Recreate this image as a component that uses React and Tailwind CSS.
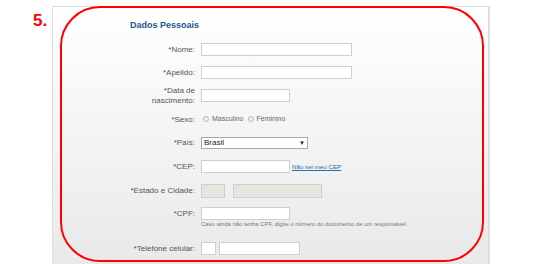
import React from "react";

const font = { fontFamily: '"Liberation Sans", Arial, sans-serif' };

function Label({ children, className = "" }) {
  return (
    <div className={"w-[142px] shrink-0 text-right text-[8px] leading-[9px] text-[#555] " + className}>
      {children}
    </div>
  );
}

function Input({ w, disabled }) {
  return (
    <div
      className={
        "h-[13px] border border-[#cfcfcf] " +
        (disabled ? "bg-[#e6e6e1]" : "bg-white") +
        " " +
        w
      }
    />
  );
}

function Radio({ label }) {
  return (
    <div className="flex items-center gap-[3px]">
      <div className="w-[6px] h-[6px] rounded-full border border-[#b8b8b8] bg-[#f1f1f1]" />
      <span className="text-[7px] text-[#666]">{label}</span>
    </div>
  );
}

export default function App() {
  return (
    <div className="relative w-[540px] h-[264px] bg-white overflow-hidden flex" style={font}>
      <div className="w-[52px] shrink-0 pl-[33px] pt-[9px]">
        <span className="text-[17px] font-bold leading-[16px] text-[#ff0000]">5.</span>
      </div>
      <div className="mt-[6px] w-[438px] h-[270px] border-l border-t border-r-2 border-[#dedede] bg-gradient-to-b from-white to-[#e8e8e8] flex flex-col">
        <div className="pt-[12px] pl-[77px] text-[9px] leading-[12px] font-bold text-[#1f5890]">
          Dados Pessoais
        </div>
        <div className="mt-[6px] h-[24px] flex items-center">
          <Label>*Nome:</Label>
          <div className="ml-[6px]"><Input w="w-[151px]" /></div>
        </div>
        <div className="h-[23px] flex items-center">
          <Label>*Apelido:</Label>
          <div className="ml-[6px]"><Input w="w-[151px]" /></div>
        </div>
        <div className="h-[23px] flex items-center">
          <Label className="leading-[10px]">*Data de<br />nascimento:</Label>
          <div className="ml-[6px]"><Input w="w-[89px]" /></div>
        </div>
        <div className="h-[24px] flex items-center">
          <Label>*Sexo:</Label>
          <div className="ml-[8px] flex items-center gap-[4px]">
            <Radio label="Masculino" />
            <Radio label="Feminino" />
          </div>
        </div>
        <div className="h-[23px] flex items-center">
          <Label>*País:</Label>
          <div className="ml-[6px] w-[107px] h-[12px] border border-[#a9a9a9] bg-white flex items-center justify-between px-[2px]">
            <span className="text-[8px] leading-[10px] text-[#222]">Brasil</span>
            <span className="text-[6px] leading-[8px] text-[#222]">▼</span>
          </div>
        </div>
        <div className="h-[25px] flex items-center">
          <Label>*CEP:</Label>
          <div className="ml-[6px] flex items-center gap-[2px]">
            <Input w="w-[89px]" />
            <span className="text-[6.2px] text-[#2a6db0] underline">Não sei meu CEP</span>
          </div>
        </div>
        <div className="h-[23px] flex items-center">
          <Label>*Estado e Cidade:</Label>
          <div className="ml-[6px] flex items-center gap-[8px]">
            <Input w="w-[24px] h-[14px]" disabled />
            <Input w="w-[89px] h-[14px]" disabled />
          </div>
        </div>
        <div className="pt-[5px] flex items-start">
          <Label className="leading-[13px]">*CPF:</Label>
          <div className="ml-[6px] flex flex-col">
            <Input w="w-[89px]" />
            <span className="mt-[1px] text-[5.9px] leading-[7px] text-[#777] whitespace-nowrap">
              Caso ainda não tenha CPF, digite o número do documento de um responsável.
            </span>
          </div>
        </div>
        <div className="mt-[14px] h-[13px] flex items-center">
          <Label>*Telefone celular:</Label>
          <div className="ml-[6px] flex items-center gap-[3px]">
            <Input w="w-[15px]" />
            <Input w="w-[81px]" />
          </div>
        </div>
      </div>
      <div className="absolute left-[60px] top-[6px] w-[424px] h-[256px] border-2 border-[#ff0000] rounded-[40px] pointer-events-none" />
    </div>
  );
}
